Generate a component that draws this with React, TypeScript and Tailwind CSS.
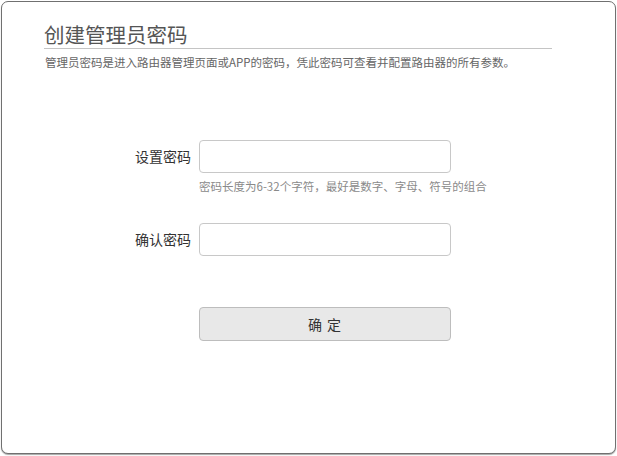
const font = { fontFamily: '"Noto Sans CJK SC", "Noto Sans", sans-serif' }

function Row({ label, hint }: { label: string; hint?: string }) {
  return (
    <div className="flex flex-col">
      <div className="flex flex-row items-center">
        <label className="w-[197px] pr-[8px] text-right text-[14px] text-[#333]">{label}</label>
        <input type="password" className="w-[252px] h-[33px] rounded-[4px] border border-[#c8c8c8] bg-white outline-none px-2" />
      </div>
      {hint && <span className="ml-[197px] mt-[5px] text-[11.5px] leading-[16px] text-[#8a8a8a]">{hint}</span>}
    </div>
  )
}

export default function App() {
  return (
    <div className="w-[617px] h-[456px] bg-white p-[1px]" style={font}>
      <div className="w-[615px] h-[453px] rounded-[7px] border-[1.5px] border-[#707070] shadow-[0_1px_1px_rgba(0,0,0,0.35)] bg-white flex flex-col">
        <div className="ml-[42px] mt-[18px] w-[508px] border-b border-[#c4c4c4] h-[29px]">
          <h1 className="text-[20.5px] leading-[28px] text-[#555]">创建管理员密码</h1>
        </div>
        <p className="ml-[43px] mt-[5px] text-[11.5px] leading-[16px] text-[#666]">
          管理员密码是进入路由器管理页面或APP的密码，凭此密码可查看并配置路由器的所有参数。
        </p>
        <div className="mt-[70px] flex flex-col">
          <Row label="设置密码" hint="密码长度为6-32个字符，最好是数字、字母、符号的组合" />
          <div className="mt-[29px]">
            <Row label="确认密码" />
          </div>
          <button className="ml-[197px] mt-[51px] w-[252px] h-[34px] rounded-[4px] border border-[#bdbdbd] bg-[#e8e8e8] text-[14px] text-[#333] tracking-[1px]">
            确 定
          </button>
        </div>
      </div>
    </div>
  )
}
